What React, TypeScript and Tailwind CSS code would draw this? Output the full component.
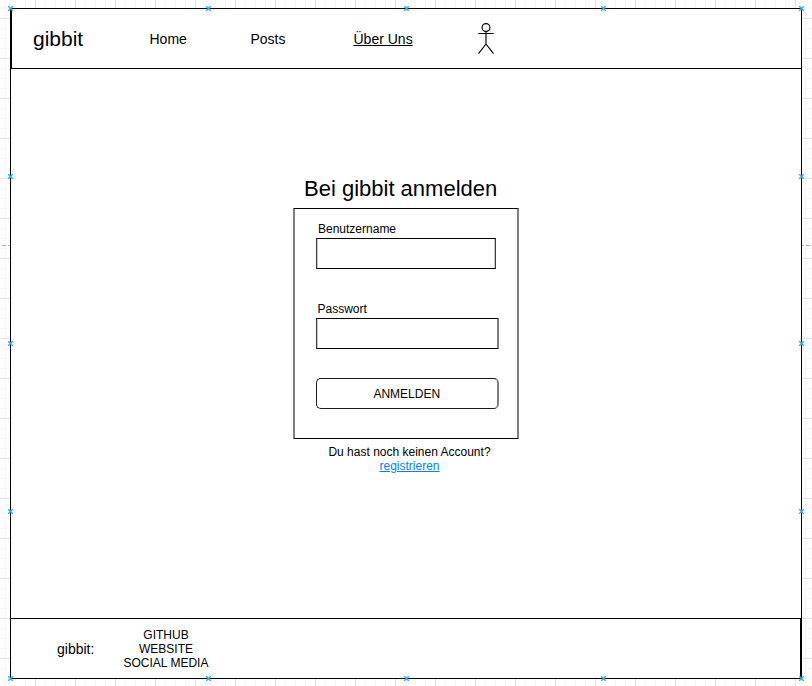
const MARKS: [number, number][] = [
  [10, 8], [208, 8], [406, 8], [603, 8], [801, 8],
  [10, 176], [801, 176], [10, 343], [801, 343], [10, 511], [801, 511],
  [10, 678], [208, 678], [406, 678], [603, 678], [801, 678],
];

const GRID = [
  "bg-[linear-gradient(90deg,#e2e2e2_1px,transparent_1px),linear-gradient(#e2e2e2_1px,transparent_1px),linear-gradient(90deg,#f7f7f7_1px,transparent_1px),linear-gradient(#f7f7f7_1px,transparent_1px)]",
  "bg-[size:40px_40px,40px_40px,10px_10px,10px_10px]",
  "bg-[position:35px_0px,0px_18px,5px_0px,0px_8px]",
].join(" ");

function Anchor({ x, y }: { x: number; y: number }) {
  return (
    <svg className="absolute" style={{ left: x - 2, top: y - 2 }} width="5" height="5" viewBox="0 0 5 5" fill="none">
      <path d="M0 0L5 5M5 0L0 5" stroke="#29b6f2" strokeWidth="1.5" />
    </svg>
  );
}

function Actor() {
  return (
    <svg className="ml-[63.5px] mt-[13px]" width="18" height="34" viewBox="0 0 18 34" fill="none" stroke="#000" strokeWidth="1.15">
      <ellipse cx="9" cy="5.5" rx="3.9" ry="3.9" />
      <path d="M9 9.4V22M1.3 11.5H16.7M9 22L1.5 31.7M9 22L16.5 31.7" />
    </svg>
  );
}

export default function App() {
  return (
    <div className={`relative h-[686px] w-[812px] overflow-hidden bg-white pl-[10px] pt-2 font-['Liberation_Sans',Arial,sans-serif] text-xs leading-[14px] text-black ${GRID}`}>
      <div className="flex h-[671px] w-[792px] flex-col border border-black bg-white">
        <header className="flex h-[60px] shrink-0 border-b border-l border-black">
          <div className="ml-[21px] mt-[18px] w-[116px] text-[21px] leading-6">gibbit</div>
          <nav className="mt-[22px] flex pl-[0.5px] text-[14px] leading-4">
            <a className="w-[101px]">Home</a>
            <a className="w-[103px]">Posts</a>
            <a className="w-[60px] whitespace-nowrap underline">Über Uns</a>
          </nav>
          <Actor />
        </header>

        <main className="flex h-[549px] shrink-0 flex-col pl-[282px]">
          <h1 className="mt-[107px] h-8 pl-[11px] text-[22px] leading-[26px]">Bei gibbit anmelden</h1>
          <form className="flex h-[231px] w-[226px] flex-col border-x-2 border-y border-x-[#808080] border-y-black pl-[21px]">
            <label className="mt-[13px] h-4 pl-[2px]">Benutzername</label>
            <div className="h-[31px] w-[180px] border border-x-[#404040] border-y-black shadow-[inset_1px_0_#c4c4c4,inset_-1px_0_#c4c4c4]" />
            <label className="mt-[33px] h-4 pl-[1.5px]">Passwort</label>
            <div className="h-[31px] w-[183px] border border-l-[#404040] border-r-2 border-r-[#808080] border-y-black shadow-[inset_1px_0_#c4c4c4]" />
            <button type="button" className="mt-[29px] h-[31px] w-[183px] rounded-[5px] border border-r-2 border-[#1a1a1a] border-r-[#808080] pr-[0.5px]">ANMELDEN</button>
          </form>
          <div className="mt-[6px] w-[233px] text-center">
            <p>Du hast noch keinen Account?</p>
            <a className="text-[#007fff] underline">registrieren</a>
          </div>
        </main>

        <footer className="flex h-[60px] shrink-0 border-r border-t border-black">
          <div className="ml-[46px] mt-[22px] w-[66px] text-[14px] leading-4">gibbit:</div>
          <div className="mt-[9px] w-[86px] whitespace-nowrap text-center">
            <p>GITHUB</p>
            <p>WEBSITE</p>
            <p>SOCIAL MEDIA</p>
          </div>
        </footer>
      </div>

      <svg className="absolute left-0 top-[245px]" width="812" height="1">
        <path d="M2 .5H6M8 .5H10M802 .5H804M806 .5H810" stroke="#b5b5b5" />
      </svg>
      {MARKS.map(([x, y]) => (
        <Anchor key={`${x}-${y}`} x={x} y={y} />
      ))}
    </div>
  );
}
